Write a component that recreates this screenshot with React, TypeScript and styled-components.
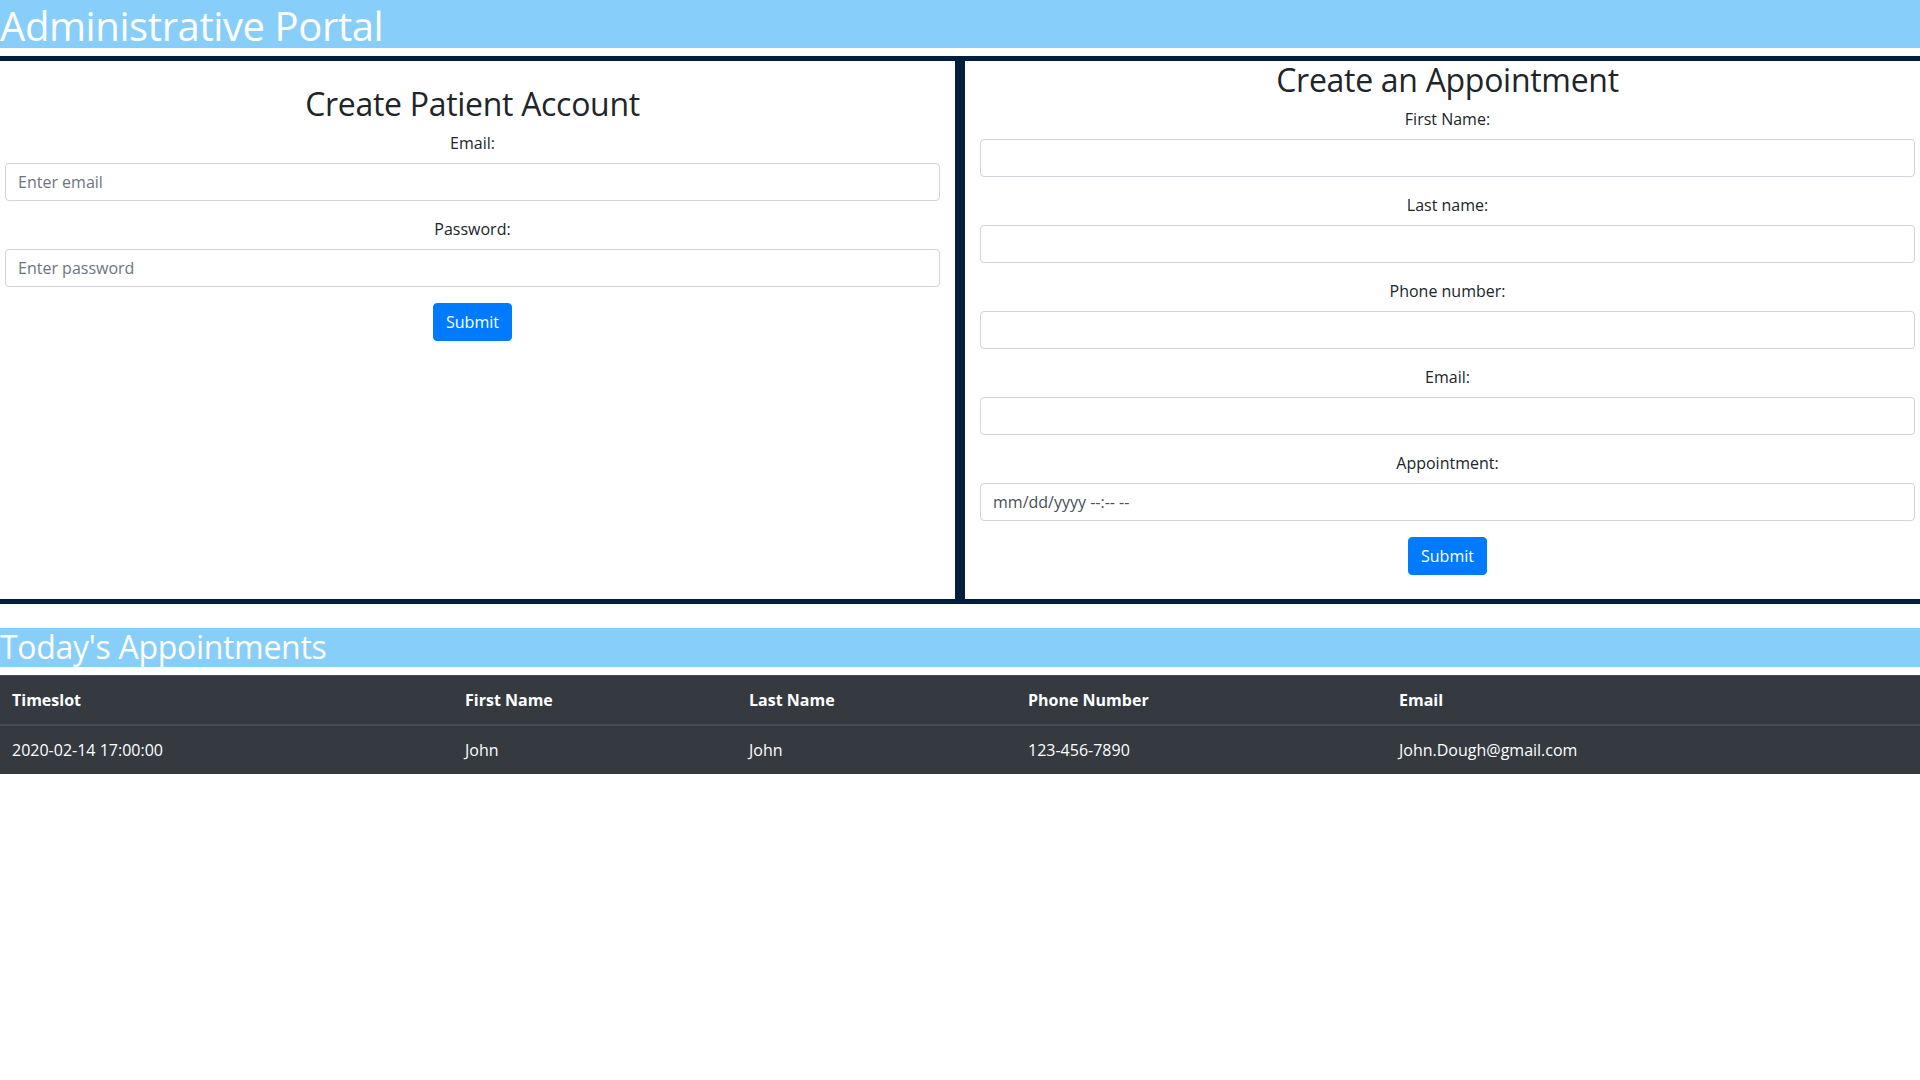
import React from 'react';
import styled, { createGlobalStyle } from 'styled-components';

const NAVY = '#001f3f';
const SKY = '#87cefa';

const GlobalStyle = createGlobalStyle`
  *, *::before, *::after {
    box-sizing: border-box;
  }

  body {
    margin: 0;
    font-family: 'Open Sans', 'Noto Sans', sans-serif;
    font-size: 16px;
    line-height: 1.5;
    color: #212529;
    background: #fff;
  }
`;

const PortalTitle = styled.h1`
  margin: 0 0 8px;
  padding-top: 3px;
  background: ${SKY};
  color: #fff;
  font-size: 40px;
  font-weight: 500;
  line-height: 45px;
  letter-spacing: -0.4px;
`;

const FormRow = styled.div`
  display: flex;
  margin: 0 -15px;
`;

const Panel = styled.section`
  flex: 0 0 50%;
  max-width: 50%;
  padding: 0 15px;
  border: 5px solid ${NAVY};
`;

const Spacer = styled.div`
  height: 24px;
`;

const PanelTitle = styled.h2`
  margin: 0 0 8px;
  text-align: center;
  font-size: 32px;
  font-weight: 500;
  line-height: 1.2;
  letter-spacing: -0.3px;
`;

const Form = styled.form<{ $bottom?: number }>`
  display: flex;
  flex-direction: column;
  align-items: center;
  margin-bottom: ${p => p.$bottom ?? 0}px;
`;

const Group = styled.div`
  width: 100%;
  margin-bottom: 16px;
  text-align: center;
`;

const Label = styled.label`
  display: block;
  margin-bottom: 8px;
  font-size: 16px;
  line-height: 24px;
  color: #212529;
`;

const Field = styled.input<{ $dim?: boolean }>`
  display: block;
  width: 100%;
  height: 38px;
  padding: 6px 12px;
  font-family: inherit;
  font-size: 16px;
  line-height: 1.5;
  color: #495057;
  background: #fff;
  border: 1px solid #ced4da;
  border-radius: 4px;
  outline: none;

  &::placeholder {
    color: ${p => (p.$dim ? '#495057' : '#6c757d')};
    opacity: 1;
  }
`;

const SubmitButton = styled.button`
  height: 38px;
  padding: 6px 12px;
  font-family: inherit;
  font-size: 16px;
  line-height: 1.5;
  color: #fff;
  background: #007bff;
  border: 1px solid #007bff;
  border-radius: 4px;
  cursor: pointer;
`;

const SectionTitle = styled.h2`
  margin: 0 0 8px;
  background: ${SKY};
  color: #fff;
  font-size: 32px;
  font-weight: 500;
  line-height: 1.2;
  letter-spacing: -0.3px;
`;

const Table = styled.table`
  width: 100%;
  table-layout: fixed;
  border-collapse: collapse;
  background: #343a40;
  color: #fff;
`;

const Th = styled.th<{ $width?: number }>`
  width: ${p => (p.$width ? `${p.$width}px` : 'auto')};
  padding: 12px;
  text-align: left;
  font-weight: 700;
  font-size: 16px;
  vertical-align: bottom;
  border-top: 1px solid #454d55;
  border-bottom: 2px solid #454d55;
`;

const Td = styled.td`
  padding: 12px;
  font-size: 16px;
  vertical-align: top;
  border-top: 1px solid #454d55;
`;

const COLUMNS = [
  { title: 'Timeslot', width: 453 },
  { title: 'First Name', width: 284 },
  { title: 'Last Name', width: 279 },
  { title: 'Phone Number', width: 371 },
  { title: 'Email' },
];

const APPOINTMENTS = [
  {
    timeslot: '2020-02-14 17:00:00',
    firstName: 'John',
    lastName: 'John',
    phone: '123-456-7890',
    email: 'John.Dough@gmail.com',
  },
];

const APPOINTMENT_FIELDS = [
  { label: 'First Name:', type: 'text' },
  { label: 'Last name:', type: 'text' },
  { label: 'Phone number:', type: 'tel' },
  { label: 'Email:', type: 'email' },
];

export default function App() {
  return (
    <>
      <GlobalStyle />
      <PortalTitle>Administrative Portal</PortalTitle>

      <FormRow>
        <Panel>
          <Spacer />
          <PanelTitle>Create Patient Account</PanelTitle>
          <Form onSubmit={e => e.preventDefault()}>
            <Group>
              <Label htmlFor="patient-email">Email:</Label>
              <Field id="patient-email" type="email" placeholder="Enter email" />
            </Group>
            <Group>
              <Label htmlFor="patient-password">Password:</Label>
              <Field id="patient-password" type="password" placeholder="Enter password" />
            </Group>
            <SubmitButton type="submit">Submit</SubmitButton>
          </Form>
        </Panel>

        <Panel>
          <PanelTitle>Create an Appointment</PanelTitle>
          <Form $bottom={24} onSubmit={e => e.preventDefault()}>
            {APPOINTMENT_FIELDS.map(f => (
              <Group key={f.label}>
                <Label>{f.label}</Label>
                <Field type={f.type} />
              </Group>
            ))}
            <Group>
              <Label>Appointment:</Label>
              <Field type="text" $dim placeholder="mm/dd/yyyy --:-- --" />
            </Group>
            <SubmitButton type="submit">Submit</SubmitButton>
          </Form>
        </Panel>
      </FormRow>

      <Spacer />
      <SectionTitle>Today's Appointments</SectionTitle>
      <Table>
        <thead>
          <tr>
            {COLUMNS.map(c => (
              <Th key={c.title} $width={c.width}>
                {c.title}
              </Th>
            ))}
          </tr>
        </thead>
        <tbody>
          {APPOINTMENTS.map(a => (
            <tr key={a.timeslot}>
              <Td>{a.timeslot}</Td>
              <Td>{a.firstName}</Td>
              <Td>{a.lastName}</Td>
              <Td>{a.phone}</Td>
              <Td>{a.email}</Td>
            </tr>
          ))}
        </tbody>
      </Table>
    </>
  );
}
